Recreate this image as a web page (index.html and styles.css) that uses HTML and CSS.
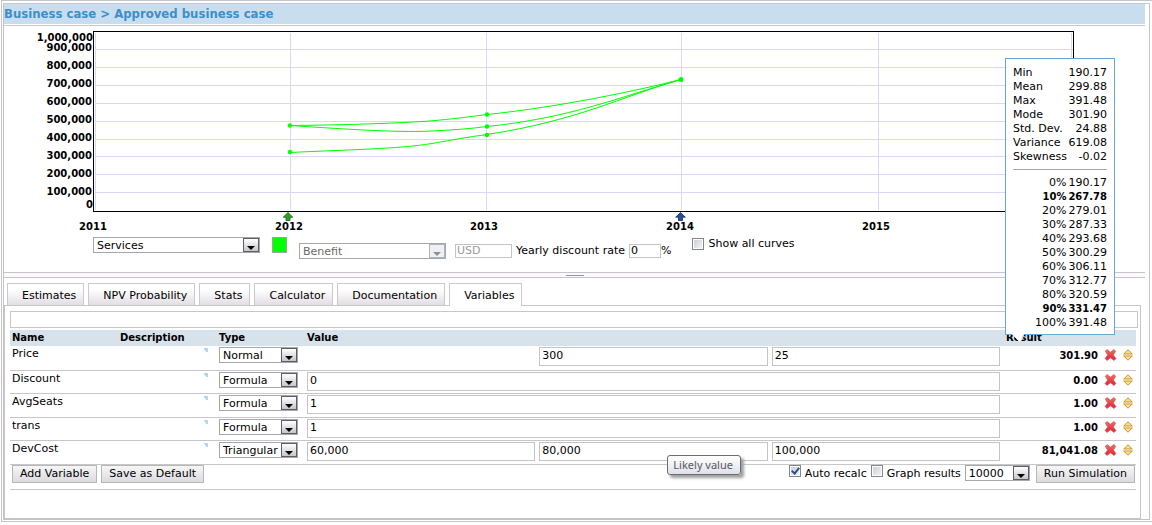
FILE: index.html
```html
<!DOCTYPE html>
<html lang="en">
<head>
<meta charset="utf-8">
<title>Approved business case</title>
<link rel="stylesheet" href="styles.css">
</head>
<body>
<svg width="0" height="0" class="defs" aria-hidden="true">
  <defs>
    <linearGradient id="red" x1="0" y1="0" x2="0" y2="1"><stop offset="0" stop-color="#f0705f"/><stop offset="1" stop-color="#dd1f38"/></linearGradient>
    <symbol id="delete" viewBox="0 0 12 12"><path d="M.8 2.200 2.600.6 6 3.200 9.400.6 11.200 2.200 8.800 6l2.600 3.600-1.800 1.800L6 8.800l-3.600 2.600L.6 9.600 3.200 6z" fill="url(#red)" stroke="#dc5a58" stroke-width=".8" stroke-linejoin="round"/></symbol>
    <symbol id="sort" viewBox="0 0 10 12"><path d="M5 .8 9.300 5H.7zM.7 7h8.600L5 11.200z" fill="#ffe08a" stroke="#c08c20" stroke-width=".9" stroke-linejoin="round"/></symbol>
  </defs>
</svg>
<div class="window">
<div class="frame">
  <h1 class="title">Business case &gt; Approved business case</h1>
  <svg class="chart" viewBox="4 26 1141 208" role="img" aria-label="Benefit by year">
    <g class="grid">
      <path d="M95 49.500H1073M95 67.500H1073M95 85.500H1073M95 103.500H1073M95 121.500H1073M95 139.500H1073M95 156.500H1073M95 174.500H1073M95 192.500H1073"/>
      <path d="M290.500 33V210M486.500 33V210M681.500 33V210M878.500 33V210M95.500 33V210M1071.500 33V210"/>
    </g>
    <rect class="plot" x="93.500" y="31.500" width="980" height="180"/>
    <g class="curves">
      <path d="M290 125.500C350 125 400 123 430 121 452 119 468 117 487 114.500 560 107 640 90 681 79.500"/>
      <path d="M290 125.500C330 128 395 133 432 131 452 130 468 129 487 126.500 570 118 620 97 681 79.500"/>
      <path d="M290 152.500C340 150 400 149 432 143.500 452 140 468 137 487 134.500 580 120 620 97 681 79.500"/>
    </g>
    <g class="dots">
      <circle cx="290" cy="125.500" r="2.200"/><circle cx="290" cy="152" r="2.200"/><circle cx="487" cy="114.500" r="2.200"/><circle cx="487" cy="126.500" r="2.200"/><circle cx="487" cy="135" r="2.200"/><circle cx="681" cy="79.500" r="2.500"/>
    </g>
    <path d="M288 212.500 292.800 217.200H290V220.500H286V217.200H283.200Z" fill="#28a428" stroke="#186018" stroke-width=".8"/>
    <path d="M680.500 212.500 685.300 217.200H682.500V220.500H678.500V217.200H675.700Z" fill="#24509c" stroke="#12285c" stroke-width=".8"/>
    <g class="ylabels">
      <text x="93" y="41">1,000,000</text><text x="92" y="51">900,000</text><text x="92" y="69">800,000</text><text x="92" y="87">700,000</text><text x="92" y="105">600,000</text><text x="92" y="123">500,000</text><text x="92" y="141">400,000</text><text x="92" y="159">300,000</text><text x="92" y="177">200,000</text><text x="92" y="195">100,000</text><text x="93" y="208">0</text>
    </g>
    <g class="xlabels">
      <text x="93" y="230">2011</text><text x="289" y="230">2012</text><text x="484" y="230">2013</text><text x="680" y="230">2014</text><text x="876" y="230">2015</text>
    </g>
  </svg>

  <div class="controls">
    <span class="pick wide"><select aria-label="Category"><option>Services</option></select></span>
    <button class="swatch" type="button" aria-label="Curve colour"></button>
    <div class="settings">
      <span class="pick mid off"><select aria-label="Measure" disabled><option>Benefit</option></select></span>
      <input class="box currency" type="text" value="USD" aria-label="Currency" disabled>
      <label for="rate">Yearly discount rate</label>
      <input class="box rate" id="rate" type="text" value="0"><span>%</span>
    </div>
    <label class="tick curves-tick"><input type="checkbox">Show all curves</label>
  </div>
  <div class="splitter"><i></i></div>

  <div class="tabs" role="tablist">
    <button type="button" role="tab">Estimates</button>
    <button type="button" role="tab">NPV Probability</button>
    <button type="button" role="tab">Stats</button>
    <button type="button" role="tab">Calculator</button>
    <button type="button" role="tab">Documentation</button>
    <button type="button" role="tab" class="active" aria-selected="true">Variables</button>
  </div>

  <div class="panel">
    <div class="strip"></div>
    <table class="vars">
      <colgroup><col class="c-name"><col class="c-desc"><col class="c-type"><col><col class="c-res"><col class="c-act"></colgroup>
      <thead><tr><th>Name</th><th>Description</th><th>Type</th><th>Value</th><th>Result</th><th></th></tr></thead>
      <tbody>
        <tr>
          <td>Price</td><td class="desc"></td>
          <td><span class="pick type"><select aria-label="Price type"><option>Normal</option></select></span></td>
          <td><div class="values"><span></span><input class="box" type="text" value="300" aria-label="Mean"><input class="box" type="text" value="25" aria-label="Deviation"></div></td>
          <td class="num">301.90</td>
          <td><div class="acts"><button type="button" aria-label="Delete"><svg width="13" height="12"><use href="#delete"/></svg></button><button type="button" aria-label="Move"><svg width="10" height="12"><use href="#sort"/></svg></button></div></td>
        </tr>
        <tr>
          <td>Discount</td><td class="desc"></td>
          <td><span class="pick type"><select aria-label="Discount type"><option>Formula</option></select></span></td>
          <td><div class="values"><input class="box full" type="text" value="0" aria-label="Discount formula"></div></td>
          <td class="num">0.00</td>
          <td><div class="acts"><button type="button" aria-label="Delete"><svg width="13" height="12"><use href="#delete"/></svg></button><button type="button" aria-label="Move"><svg width="10" height="12"><use href="#sort"/></svg></button></div></td>
        </tr>
        <tr>
          <td>AvgSeats</td><td class="desc"></td>
          <td><span class="pick type"><select aria-label="AvgSeats type"><option>Formula</option></select></span></td>
          <td><div class="values"><input class="box full" type="text" value="1" aria-label="AvgSeats formula"></div></td>
          <td class="num">1.00</td>
          <td><div class="acts"><button type="button" aria-label="Delete"><svg width="13" height="12"><use href="#delete"/></svg></button><button type="button" aria-label="Move"><svg width="10" height="12"><use href="#sort"/></svg></button></div></td>
        </tr>
        <tr>
          <td>trans</td><td class="desc"></td>
          <td><span class="pick type"><select aria-label="trans type"><option>Formula</option></select></span></td>
          <td><div class="values"><input class="box full" type="text" value="1" aria-label="trans formula"></div></td>
          <td class="num">1.00</td>
          <td><div class="acts"><button type="button" aria-label="Delete"><svg width="13" height="12"><use href="#delete"/></svg></button><button type="button" aria-label="Move"><svg width="10" height="12"><use href="#sort"/></svg></button></div></td>
        </tr>
        <tr>
          <td>DevCost</td><td class="desc"></td>
          <td><span class="pick type"><select aria-label="DevCost type"><option>Triangular</option></select></span></td>
          <td><div class="values"><input class="box" type="text" value="60,000" aria-label="Lowest value"><input class="box" type="text" value="80,000" aria-label="Likely value"><input class="box" type="text" value="100,000" aria-label="Highest value"><div class="tooltip" role="tooltip">Likely value</div></div></td>
          <td class="num">81,041.08</td>
          <td><div class="acts"><button type="button" aria-label="Delete"><svg width="13" height="12"><use href="#delete"/></svg></button><button type="button" aria-label="Move"><svg width="10" height="12"><use href="#sort"/></svg></button></div></td>
        </tr>
      </tbody>
    </table>
    <div class="actions">
      <button class="btn" type="button">Add Variable</button>
      <button class="btn" type="button">Save as Default</button>
      <div class="run">
        <label class="tick"><input type="checkbox" checked>Auto recalc</label>
        <label class="tick"><input type="checkbox">Graph results</label>
        <span class="pick count"><select aria-label="Iterations"><option>10000</option></select></span>
        <button class="btn" type="button">Run Simulation</button>
      </div>
    </div>
  </div>

  <aside class="stats" aria-label="Result statistics">
    <dl>
      <dt>Min</dt><dd>190.17</dd>
      <dt>Mean</dt><dd>299.88</dd>
      <dt>Max</dt><dd>391.48</dd>
      <dt>Mode</dt><dd>301.90</dd>
      <dt>Std. Dev.</dt><dd>24.88</dd>
      <dt>Variance</dt><dd>619.08</dd>
      <dt>Skewness</dt><dd>-0.02</dd>
    </dl>
    <hr>
    <dl class="percentiles">
      <dt>0%</dt><dd>190.17</dd>
      <dt class="key">10%</dt><dd class="key">267.78</dd>
      <dt>20%</dt><dd>279.01</dd>
      <dt>30%</dt><dd>287.33</dd>
      <dt>40%</dt><dd>293.68</dd>
      <dt>50%</dt><dd>300.29</dd>
      <dt>60%</dt><dd>306.11</dd>
      <dt>70%</dt><dd>312.77</dd>
      <dt>80%</dt><dd>320.59</dd>
      <dt class="key">90%</dt><dd class="key">331.47</dd>
      <dt>100%</dt><dd>391.48</dd>
    </dl>
    <svg class="pointer" width="12" height="9" viewBox="0 0 12 9"><path d="M0 0H12L8 8Z" fill="#fff"/><path d="M1 1 8 8 12 1" fill="none" stroke="#dceaf4"/></svg>
  </aside>
</div>
</div>
</body>
</html>
```

FILE: styles.css
```css
*, *::before, *::after { box-sizing: border-box; }
body {
  margin: 0;
  padding: 0 0 2px 1px;
  background: #fff;
  color: #000;
  font: 11px/14px "DejaVu Sans", Verdana, sans-serif;
}
button, input, select { font: inherit; color: inherit; margin: 0; }
.defs { position: absolute; }
.window {
  border: 1px solid #c6c6c8;
  border-right: 0;
  padding: 2px 2px 1px 1px;
}
.frame {
  position: relative;
  border: 1px solid #c6c0c8;
  border-top-color: #d2c6d0;
  padding-right: 4px;
}
.title {
  margin: 0;
  height: 22px;
  border-bottom: 1px solid #c8c8c4;
  box-shadow: inset 0 -1px #fff;
  background: #c8deee;
  color: #3e8ec8;
  font: bold 13px/20px "DejaVu Sans Condensed", "DejaVu Sans", Tahoma, sans-serif;
}

/* Chart */
.chart { display: block; width: 100%; font-size: 10px; font-weight: bold; }
.grid { fill: none; stroke: #dcd6fa; }
.plot { fill: none; stroke: #000; }
.curves { fill: none; stroke: #00ff00; }
.dots { fill: #00ff00; }
.ylabels { text-anchor: end; }
.xlabels { text-anchor: middle; }

/* Controls below the chart */
.controls {
  display: flex;
  align-items: flex-start;
  height: 38px;
  padding: 3px 0 0 89px;
}
.settings { display: flex; align-items: center; height: 16px; margin-top: 6px; }
.pick { position: relative; display: block; height: 16px; background: #fff; border: 1px solid #a4a8ae; }
.pick select {
  display: block;
  appearance: none;
  width: 100%;
  height: 14px;
  padding: 1px 16px 0 3px;
  border: 0;
  background: transparent;
  line-height: 13px;
}
.pick::before {
  content: "";
  position: absolute;
  top: 0; right: 0;
  width: 16px; height: 14px;
  border: 1px solid #5e5e62;
  background: linear-gradient(#fff, #c4c6ca);
  pointer-events: none;
}
.pick::after {
  content: "";
  position: absolute;
  right: 4px; bottom: 2px;
  border: 4px solid transparent;
  border-top-color: #000;
  border-bottom: 0;
  pointer-events: none;
}
.pick.off { color: #6a6a6a; }
.pick.off select { opacity: 1; color: #6a6a6a; }
.pick.off::before { border-color: #b0b4bc; background: #eef0f4; }
.pick.off::after { border-top-color: #909090; }
.wide { width: 167px; }
.mid { width: 147px; }
.type { width: 79px; }
.count { width: 65px; }
.swatch { width: 15px; height: 16px; margin: 0 12px; padding: 0; border: 1px solid #98a898; background: #00ff00; }
.box { height: 14px; padding: 0 2px; border: 1px solid #c2c4c6; border-radius: 0; background: #fff; min-width: 0; }
.currency { width: 57px; margin: 0 4px 0 9px; color: #9a9a9a; padding: 0 1px; }
.rate { width: 32px; margin-left: 4px; padding: 0 1px; }
.tick { display: flex; align-items: center; }
.tick input {
  appearance: none;
  width: 12px; height: 12px;
  margin-right: 4px;
  border: 1px solid #84868a;
  background: linear-gradient(135deg, #c8ccd4, #f6f6f6);
  box-shadow: inset 0 0 0 1px #fff;
}
.tick input:checked::after {
  content: "";
  display: block;
  width: 5px; height: 8px;
  margin: 0 0 0 3px;
  border: solid #24509c;
  border-width: 0 2px 2px 0;
  transform: rotate(40deg);
}
.curves-tick { margin-left: 21px; }
.splitter { height: 6px; border: solid #ccc0d0; border-width: 1px 0; background: #fafcfa; }
.splitter i { display: block; width: 18px; height: 1px; margin: 2px auto 0; background: #90a090; }

/* Tabs */
.tabs { display: flex; gap: 4px; padding: 5px 0 0 3px; }
.tabs button {
  height: 22px;
  padding: 2px 7px 0 14px;
  border: 1px solid #ccc8cc;
  border-bottom: 0;
  background: linear-gradient(#fff 25%, #e2dee4);
}
.tabs .active { height: 23px; margin-bottom: -1px; background: #fff; z-index: 1; }
.panel {
  min-height: 214px;
  border: 1px solid #c8c4c8;
  padding: 5px 4px 0 5px;
  margin-right: 4px;
}
.strip { height: 17px; margin-right: -2px; border: 1px solid #c8c6c8; }

/* Variables table */
.vars { width: 100%; margin-top: 2px; table-layout: fixed; border-collapse: collapse; }
.c-name { width: 108px; }
.c-desc { width: 99px; }
.c-type { width: 88px; }
.c-res { width: 95px; }
.c-act { width: 37px; }
.vars th { height: 16px; padding: 0 2px; background: #d8e2ea; font-size: 10px; text-align: left; }
.vars th:nth-child(3), .vars td:nth-child(3) { padding-left: 2px; }
.vars td { height: 24px; padding: 1px 2px; vertical-align: top; border-bottom: 1px solid #c8c6c8; line-height: 14px; }
.vars tr:nth-child(even) td { height: 23px; }
.vars td.desc { background: linear-gradient(45deg, transparent 50%, #b4d6ee 50%) right 9px top 2px / 5px 5px no-repeat; }
.vars .num { padding: 3px 1px 0; font-size: 10px; font-weight: bold; text-align: right; }
.values { position: relative; display: grid; grid-template-columns: repeat(3, 1fr); gap: 4px; margin-right: 2px; }
.values .box { width: 100%; height: 19px; padding-bottom: 2px; }
.values .full { grid-column: 1 / -1; }
.acts { display: flex; justify-content: space-between; padding: 0 1px 0 3px; }
.acts button { height: 16px; padding: 0; border: 0; background: none; }
.acts svg { display: block; }
.tooltip {
  position: absolute;
  top: 13px; left: 52%;
  height: 20px;
  padding: 0 7px 0 5px;
  border: 1px solid #66706a;
  border-radius: 3px;
  background: linear-gradient(#fff, #e0e0ee);
  box-shadow: 3px 3px 3px #a0a0a0;
  color: #585860;
  font: 11px/18px "Noto Sans", sans-serif;
  z-index: 2;
}

/* Action row */
.actions { display: flex; gap: 4px; height: 25px; padding: 0 1px 0 2px; border-bottom: 1px solid #c8c6c8; }
.btn {
  height: 18px;
  padding: 0 7px;
  border: 1px solid #b4b8b6;
  background: linear-gradient(#f6f6f6, #dcdce0);
  line-height: 14px;
}
.run { display: flex; align-items: flex-start; margin-left: auto; }
.run .tick { align-items: flex-start; margin-right: 4px; line-height: 18px; }
.run .count { margin-right: 6px; }

/* Result statistics popup */
.stats {
  position: absolute;
  top: 54px; right: 34px;
  width: 110px;
  padding: 7px 7px 4px;
  border: 1px solid #68a8d0;
  background: #fff;
  z-index: 3;
}
.stats dl { display: grid; grid-template-columns: auto auto; margin: 0; }
.stats dd { margin: 0; text-align: right; }
.stats hr { height: 1px; margin: 5px 0 6px; border: 0; background: #a0aca0; }
.stats .percentiles { grid-template-columns: 1fr auto; column-gap: 2px; }
.stats .percentiles dt { text-align: right; }
.stats .key { font-size: 10px; font-weight: bold; }
.pointer { position: absolute; top: 100%; left: 6px; }
```
